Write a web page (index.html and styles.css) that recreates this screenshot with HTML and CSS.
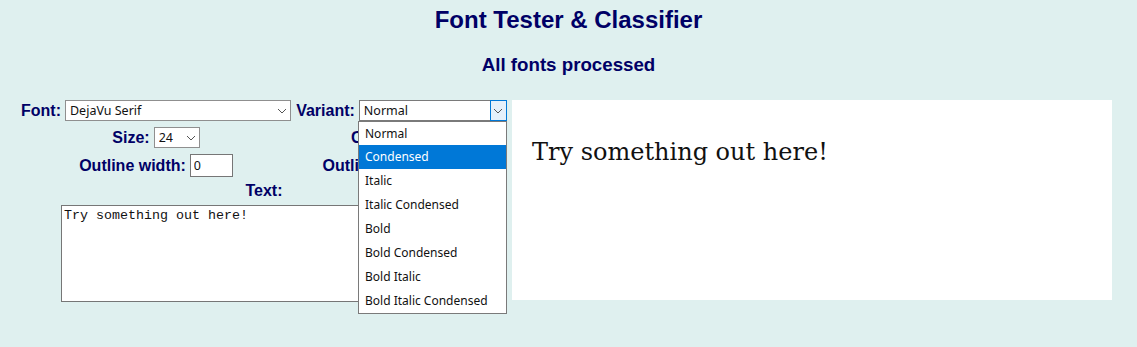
FILE: index.html
```html
<!DOCTYPE html>
<html lang="en">
<head>
    <meta charset="UTF-8">
    <meta name="viewport" content="width=device-width, initial-scale=1.0">
    <title>Font Tester &amp; Classifier</title>
    <link rel="stylesheet" href="styles.css">
</head>
<body>
    <h2 class="title">Font Tester &amp; Classifier</h2>
    <h3 class="status">All fonts processed</h3>

    <div class="tester">
        <div class="controls">
            <div class="field">
                <label for="font">Font:</label>
                <span class="pick">
                    <select id="font" class="font-select">
                        <option>DejaVu Serif</option>
                        <option>DejaVu Sans</option>
                        <option>Liberation Serif</option>
                    </select>
                    <svg class="chev" width="10" height="6" viewBox="0 0 10 6"><path d="M1 1l4 4 4-4" fill="none" stroke="#555" stroke-width="1"/></svg>
                </span>
            </div>
            <div class="field variant">
                <label for="variant">Variant:</label>
                <span class="pick">
                    <select id="variant" class="variant-select">
                        <option>Normal</option>
                    </select>
                    <span class="chev-box"></span>
                    <svg class="chev" width="10" height="6" viewBox="0 0 10 6"><path d="M1 1l4 4 4-4" fill="none" stroke="#555" stroke-width="1"/></svg>
                </span>
                <ul class="menu">
                    <li>Normal</li>
                    <li class="active">Condensed</li>
                    <li>Italic</li>
                    <li>Italic Condensed</li>
                    <li>Bold</li>
                    <li>Bold Condensed</li>
                    <li>Bold Italic</li>
                    <li>Bold Italic Condensed</li>
                </ul>
            </div>

            <div class="field">
                <label for="size">Size:</label>
                <span class="pick">
                    <select id="size" class="size-select">
                        <option>24</option>
                    </select>
                    <svg class="chev" width="10" height="6" viewBox="0 0 10 6"><path d="M1 1l4 4 4-4" fill="none" stroke="#555" stroke-width="1"/></svg>
                </span>
            </div>
            <div class="field">
                <label for="color">Color:</label>
                <input id="color" class="swatch" type="text" value="">
            </div>

            <div class="field">
                <label for="outline">Outline width:</label>
                <input id="outline" class="num" type="text" value="0">
            </div>
            <div class="field">
                <label for="outline-color">Outline color:</label>
                <input id="outline-color" class="swatch" type="text" value="">
            </div>

            <div class="field full">
                <label for="sample">Text:</label>
            </div>
            <div class="field full">
                <textarea id="sample">Try something out here!</textarea>
            </div>
        </div>

        <div class="preview">
            <p>Try something out here!</p>
        </div>
    </div>
</body>
</html>
```

FILE: styles.css
```css
body {
    margin: 0;
    min-height: 100vh;
    background-color: #dff0ef;
    font-family: "Liberation Sans", Arial, sans-serif;
    color: #000066;
}

.title {
    margin: 0;
    padding-top: 6px;
    margin-bottom: 20px;
    font-size: 24px;
    text-align: center;
}

.status {
    margin: 0;
    font-size: 18.72px;
    text-align: center;
}

.tester {
    display: flex;
    align-items: flex-start;
    gap: 5px;
    padding: 24px 0 40px 21px;
}

.controls {
    display: grid;
    grid-template-columns: 270px 211px;
    column-gap: 5px;
    row-gap: 5px;
}

.field {
    display: flex;
    justify-content: center;
    align-items: center;
    gap: 4px;
    font-size: 16px;
    font-weight: bold;
}

.field.full {
    grid-column: 1 / 3;
}

.variant {
    position: relative;
}

.pick {
    position: relative;
    display: inline-flex;
}

select {
    appearance: none;
    height: 21px;
    margin: 0;
    padding: 0 20px 0 4px;
    border: 1px solid #8f8f8f;
    border-radius: 0;
    background-color: white;
    font-family: "Noto Sans", "Open Sans", sans-serif;
    font-size: 12.5px;
    color: #111;
}

.font-select {
    width: 226px;
}

.variant-select {
    width: 148px;
    border-color: #7a7a7a;
}

.size-select {
    width: 46px;
}

.chev {
    position: absolute;
    right: 4px;
    top: 8px;
}

.chev-box {
    position: absolute;
    right: 0;
    top: 0;
    width: 17px;
    height: 21px;
    box-sizing: border-box;
    border: 1px solid #0078d7;
    background-color: #e5f1fb;
}

input {
    box-sizing: border-box;
    height: 23px;
    margin: 0;
    padding: 0 3px;
    border: 1px solid #767676;
    background-color: white;
    font-family: "Noto Sans", "Open Sans", sans-serif;
    font-size: 12.5px;
    color: #111;
}

.num {
    width: 43px;
}

.swatch {
    width: 50px;
}

textarea {
    box-sizing: border-box;
    width: 406px;
    height: 97px;
    margin: 0;
    padding: 2px;
    border: 1px solid #767676;
    resize: none;
    font-family: "Liberation Mono", "Courier New", monospace;
    font-size: 13.33px;
    color: #111;
}

.menu {
    position: absolute;
    left: 62px;
    top: 21px;
    z-index: 2;
    width: 149px;
    margin: 0;
    padding: 0;
    list-style: none;
    box-sizing: border-box;
    border: 1px solid #7a7a7a;
    background-color: white;
    font-family: "Noto Sans", "Open Sans", sans-serif;
    font-size: 12px;
    font-weight: normal;
    color: #111;
}

.menu li {
    height: 24px;
    line-height: 23px;
    padding-left: 6px;
}

.menu li:first-child {
    height: 23px;
}

.menu .active {
    background-color: #0078d7;
    color: white;
}

.preview {
    box-sizing: border-box;
    width: 600px;
    height: 200px;
    padding: 20px;
    background-color: white;
}

.preview p {
    margin: 18px 0 0;
    font-family: "DejaVu Serif", serif;
    font-size: 24px;
    color: #111;
}
```
